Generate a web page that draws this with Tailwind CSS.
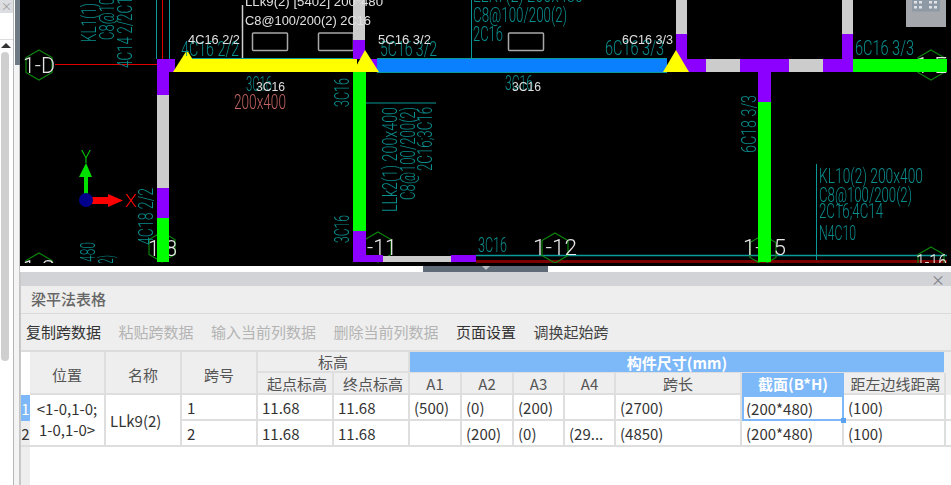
<!DOCTYPE html>
<html lang="en">
<head>
    <meta charset="UTF-8">
    <meta name="viewport" content="width=device-width, initial-scale=1.0">
    <title>梁平法表格</title>
    <script src="https://cdn.jsdelivr.net/npm/@tailwindcss/browser@4"></script>
</head>
<body class="bg-white font-['Noto_Sans_CJK_SC','Noto_Sans',sans-serif] overflow-hidden">
<div class="flex w-[951px] h-[485px] overflow-hidden">

    <!-- Left docked strip -->
    <div class="w-5 shrink-0 flex">
        <div class="w-[14px] flex flex-col border-r border-[#b4b6ba]">
            <div class="h-[13px] bg-[#dcdde0] text-[#999] text-[11px] leading-[13px] pl-[1px]">×</div>
            <div class="h-[27px] bg-white border-b border-[#ddd]"></div>
            <div class="flex-1 px-[1px]">
                <div class="w-0 h-0 mt-[3px] ml-[0px] border-x-[5px] border-x-transparent border-b-[5px] border-b-[#333]"></div>
                <div class="w-2 h-[309px] mt-[4px] bg-[#cfcfcf] rounded-[4px]"></div>
            </div>
        </div>
        <div class="w-[6px] flex flex-col">
            <div class="h-[65px] bg-[#6f7a85] ml-[1px]"></div>
            <div class="flex-1 bg-[#f4f4f4] border-r border-[#c4c4c4]"></div>
        </div>
    </div>

    <div class="flex-1 flex flex-col min-w-0">
        <!-- CAD view -->
        <svg class="block w-[931px] h-[266px] shrink-0 bg-black blur-[0.4px]" viewBox="20 0 931 266" xmlns="http://www.w3.org/2000/svg">
            <!-- axis + guide lines -->
            <g fill="none" stroke-width="1">
                <path d="M55 64.5H157M162.5 0V59" stroke="#e00000"/>
                <path d="M156.5 0V59M169.5 0V59M471.5 0V58M366 103H436M816.5 164V260" stroke="#0b9a9a"/>
                <path d="M242.500 5V59" stroke="#cfcfcf" stroke-width="1.500"/>
                <path d="M476 255.500H947" stroke="#0b9a9a" stroke-width="1.500"/>
                <path d="M476 261.500H947" stroke="#7a0000" stroke-width="3"/>
                <rect x="252.500" y="33" width="35" height="17.500" stroke="#a8a8a8" stroke-width="1.500" rx="1"/>
                <rect x="318.500" y="33" width="35" height="17.500" stroke="#a8a8a8" stroke-width="1.500" rx="1"/>
                <rect x="508.500" y="33" width="35" height="17.500" stroke="#a8a8a8" stroke-width="1.500" rx="1"/>
            </g>

            <!-- grid bubbles -->
            <g fill="none" stroke="#0c860c" stroke-width="1.200">
                <polygon points="39,50 52,57.500 52,72.500 39,80 26,72.500 26,57.500"/>
                <polygon points="39,253 52,260.500 52,275.500 39,283 26,275.500 26,260.500"/>
                <polygon points="162,232 175,239.500 175,254.500 162,262 149,254.500 149,239.500"/>
                <polygon points="378,232 391,239.500 391,254.500 378,262 365,254.500 365,239.500"/>
                <polygon points="555,233 568,240.500 568,255.500 555,263 542,255.500 542,240.500"/>
                <polygon points="763,235 776,242.500 776,257.500 763,265 750,257.500 750,242.500"/>
                <polygon points="931,50 944,57.500 944,72.500 931,80 918,72.500 918,57.500"/>
                <polygon points="931,247 944,254.500 944,269.500 931,277 918,269.500 918,254.500"/>
            </g>

            <!-- axis labels under the beams -->
            <g font-size="22" class="fill-[#e6e6e6] font-['Roboto',sans-serif] font-light">
                <text x="23" y="73" textLength="32" lengthAdjust="spacingAndGlyphs">1-D</text>
                <text x="23" y="276" textLength="32" lengthAdjust="spacingAndGlyphs">1-C</text>
                <text x="148" y="256" textLength="29" lengthAdjust="spacingAndGlyphs">1-8</text>
                <text x="367" y="255" textLength="30" lengthAdjust="spacingAndGlyphs">-11</text>
                <text x="533" y="255" textLength="44" lengthAdjust="spacingAndGlyphs">1-12</text>
                <text x="743" y="255" textLength="43" lengthAdjust="spacingAndGlyphs">1-15</text>
                <text x="916" y="73" textLength="31" lengthAdjust="spacingAndGlyphs">1-E</text>
                <text x="916" y="270" textLength="31" lengthAdjust="spacingAndGlyphs">1-16</text>
            </g>

            <!-- beams -->
            <g>
                <rect x="157" y="59" width="18" height="13" fill="#8b00ff"/>
                <rect x="157" y="59" width="12" height="36" fill="#8b00ff"/>
                <rect x="157" y="95" width="12" height="93" fill="#cccccc"/>
                <rect x="157" y="188" width="12" height="30" fill="#8b00ff"/>
                <rect x="157" y="218" width="12" height="44" fill="#00ff00"/>

                <rect x="353" y="0" width="12" height="40" fill="#cccccc"/>
                <rect x="353" y="40" width="12" height="19" fill="#8b00ff"/>
                <rect x="353" y="72" width="13" height="159" fill="#00ff00"/>
                <rect x="353" y="231" width="13" height="31" fill="#8b00ff"/>
                <rect x="353" y="255" width="30" height="7" fill="#8b00ff"/>
                <rect x="383" y="256" width="68" height="6" fill="#cccccc"/>
                <rect x="451" y="255" width="25" height="7" fill="#8b00ff"/>

                <rect x="365" y="59" width="12" height="13" fill="#8b00ff"/>
                <rect x="377" y="59" width="290" height="13" fill="#0a80ff"/>

                <rect x="676" y="0" width="11" height="34" fill="#cccccc"/>
                <rect x="676" y="34" width="11" height="38" fill="#8b00ff"/>
                <rect x="676" y="59" width="30" height="13" fill="#8b00ff"/>
                <rect x="706" y="59" width="34" height="13" fill="#cccccc"/>
                <rect x="740" y="59" width="49" height="13" fill="#8b00ff"/>
                <rect x="789" y="59" width="34" height="13" fill="#cccccc"/>
                <rect x="823" y="59" width="30" height="13" fill="#8b00ff"/>
                <rect x="842" y="0" width="11" height="34" fill="#cccccc"/>
                <rect x="842" y="34" width="11" height="38" fill="#8b00ff"/>
                <rect x="853" y="59" width="94" height="13" fill="#00ff00"/>

                <rect x="758" y="72" width="13" height="30" fill="#8b00ff"/>
                <rect x="758" y="102" width="13" height="160" fill="#00ff00"/>

                <!-- selected span -->
                <rect x="187" y="59" width="170" height="13" fill="#ffff00"/>
                <path d="M187 58.500H353M377 58.500H667M377 72.500H667" fill="none" stroke="#0b9a9a"/>
                <polygon points="187,50 200,72 173,72" fill="#ffff00"/>
                <polygon points="365,50 379,72 353,72" fill="#ffff00"/>
                <polygon points="676,50 689,72 663,72" fill="#ffff00"/>
            </g>

            <!-- dim teal annotations -->
            <g font-size="20" class="fill-[#0a8f8f] font-['Roboto',sans-serif] font-light">
                <text x="181" y="56" textLength="58" lengthAdjust="spacingAndGlyphs">4C16 2/2</text>
                <text x="380" y="56" textLength="57" lengthAdjust="spacingAndGlyphs">5C16 3/2</text>
                <text x="605" y="55" textLength="59" lengthAdjust="spacingAndGlyphs">6C16 3/3</text>
                <text x="855" y="55" textLength="59" lengthAdjust="spacingAndGlyphs">6C16 3/3</text>
                <text x="246" y="91" textLength="26" lengthAdjust="spacingAndGlyphs">3C16</text>
                <text x="505" y="90" textLength="28" lengthAdjust="spacingAndGlyphs">3C16</text>
                <text x="478" y="252" textLength="29" lengthAdjust="spacingAndGlyphs">3C16</text>
                <text x="473" y="2" textLength="110" lengthAdjust="spacingAndGlyphs">LLK7(2) 200x480</text>
                <text x="473" y="22" textLength="94" lengthAdjust="spacingAndGlyphs">C8@100/200(2)</text>
                <text x="473" y="41" textLength="30" lengthAdjust="spacingAndGlyphs">2C16</text>
                <text x="819" y="183" textLength="104" lengthAdjust="spacingAndGlyphs">KL10(2) 200x400</text>
                <text x="819" y="202" textLength="93" lengthAdjust="spacingAndGlyphs">C8@100/200(2)</text>
                <text x="819" y="218" textLength="64" lengthAdjust="spacingAndGlyphs">2C16;4C14</text>
                <text x="819" y="240" textLength="37" lengthAdjust="spacingAndGlyphs">N4C10</text>
                <text transform="translate(96 42) rotate(-90)" textLength="39" lengthAdjust="spacingAndGlyphs">KL1(1)</text>
                <text transform="translate(114 40) rotate(-90)" textLength="92" lengthAdjust="spacingAndGlyphs">C8@100/200(2)</text>
                <text transform="translate(132 68) rotate(-90)" textLength="78" lengthAdjust="spacingAndGlyphs">4C14 2/2C16</text>
                <text transform="translate(349 107) rotate(-90)" textLength="29" lengthAdjust="spacingAndGlyphs">3C16</text>
                <text transform="translate(349 243) rotate(-90)" textLength="28" lengthAdjust="spacingAndGlyphs">3C16</text>
                <text transform="translate(397 212) rotate(-90)" textLength="105" lengthAdjust="spacingAndGlyphs">LLk2(1) 200x400</text>
                <text transform="translate(415 200) rotate(-90)" textLength="93" lengthAdjust="spacingAndGlyphs">C8@100/200(2)</text>
                <text transform="translate(432 171) rotate(-90)" textLength="64" lengthAdjust="spacingAndGlyphs">2C16;3C16</text>
                <text transform="translate(153 245) rotate(-90)" textLength="57" lengthAdjust="spacingAndGlyphs">4C18 2/2</text>
                <text transform="translate(95 262) rotate(-90)" textLength="20" lengthAdjust="spacingAndGlyphs">480</text>
                <text transform="translate(113 264) rotate(-90)" textLength="9" lengthAdjust="spacingAndGlyphs">2)</text>
                <text transform="translate(756 153) rotate(-90)" textLength="58" lengthAdjust="spacingAndGlyphs">6C18 3/3</text>
            </g>

            <!-- bright span labels -->
            <g font-size="13" class="fill-[#e0e0e0] font-['Liberation_Sans',sans-serif]">
                <text x="188" y="44" textLength="52" lengthAdjust="spacingAndGlyphs">4C16 2/2</text>
                <text x="378" y="44" textLength="53" lengthAdjust="spacingAndGlyphs">5C16 3/2</text>
                <text x="622" y="44" textLength="51" lengthAdjust="spacingAndGlyphs">6C16 3/3</text>
                <text x="256" y="91" textLength="29" lengthAdjust="spacingAndGlyphs">3C16</text>
                <text x="512" y="91" textLength="29" lengthAdjust="spacingAndGlyphs">3C16</text>
                <text x="245" y="6" textLength="138" lengthAdjust="spacingAndGlyphs">LLk9(2) [5402] 200*480</text>
                <text x="245" y="25" textLength="126" lengthAdjust="spacingAndGlyphs">C8@100/200(2) 2C16</text>
            </g>
            <text x="234" y="109" font-size="20" textLength="52" lengthAdjust="spacingAndGlyphs" class="fill-[#c46464] font-['Roboto',sans-serif] font-light">200x400</text>

            <!-- UCS icon -->
            <path d="M84 195V177H79L86 163L92 177H88V195Z" fill="#00e000"/>
            <path d="M90 197H108V194L123 200.500L108 207V204H90Z" fill="#ff0000"/>
            <circle cx="86" cy="200" r="7" fill="#00008b"/>
            <text x="81" y="163" font-size="18" textLength="10" lengthAdjust="spacingAndGlyphs" class="fill-[#00d000] font-['Roboto',sans-serif] font-light">Y</text>
            <text x="125" y="207" font-size="18" textLength="12" lengthAdjust="spacingAndGlyphs" class="fill-[#ff0000] font-['Roboto',sans-serif] font-light">X</text>

            <!-- view cube widget -->
            <rect x="906" y="0" width="40" height="27" fill="#a4a7ab"/>
            <rect x="912" y="0" width="28" height="11.500" fill="#8e99a6"/>
            <g fill="#dfe3e8">
                <rect x="914" y="1" width="3" height="2.500"/><rect x="919" y="1" width="3" height="2.500"/><rect x="929" y="1" width="3" height="2.500"/><rect x="934" y="1" width="3" height="2.500"/>
                <rect x="914" y="6" width="3" height="2.500"/><rect x="919" y="6" width="3" height="2.500"/><rect x="929" y="6" width="3" height="2.500"/><rect x="934" y="6" width="3" height="2.500"/>
            </g>

            <!-- drawing area stops short of the view edge -->
            <rect x="20" y="263" width="931" height="3" fill="#000000"/>
        </svg>

        <!-- Splitter -->
        <div class="h-[6px] shrink-0 flex bg-white">
            <div class="ml-[403px] w-[125px] h-[6px] bg-[#5f6b76] flex justify-center">
                <div class="w-0 h-0 border-x-[4px] border-x-transparent border-t-[4px] border-t-[#b9bec3]"></div>
            </div>
        </div>

        <!-- Panel -->
        <div class="flex-1 flex flex-col min-h-0 border-l border-[#c9c9c9] bg-white">
            <div class="h-[14px] shrink-0 bg-[#d2d3d7] flex justify-end items-center pr-[6px] text-[#7d7f84] text-[14px] leading-none">×</div>
            <div class="h-[28px] shrink-0 bg-[#eeeeee] border-b border-[#dadada] flex items-center pl-[10px] text-[15px] font-medium text-[#666]">梁平法表格</div>
            <div class="h-[38px] shrink-0 bg-[#eeeeee] flex items-center gap-[17.5px] pl-[5px] text-[15px] text-[#333] border-b-2 border-[#dcdcdc]">
                <span>复制跨数据</span>
                <span class="text-[#b4b4b4]">粘贴跨数据</span>
                <span class="text-[#b4b4b4]">输入当前列数据</span>
                <span class="text-[#b4b4b4]">删除当前列数据</span>
                <span>页面设置</span>
                <span class="text-[#444]">调换起始跨</span>
            </div>

            <!-- Grid -->
            <div class="grid grid-cols-[9px_76px_76px_76px_76px_76px_52px_52px_51px_51px_126px_102px_100px_7px] grid-rows-[21px_22px_26px_26px] text-[15px] leading-none text-[#333]">
                <div class="row-span-2 bg-white"></div>
                <div class="row-span-2 pt-[4px] bg-[#eeeeee] text-[#555] flex items-center justify-center border-r-2 border-b-2 border-[#dedede]">位置</div>
                <div class="row-span-2 pt-[4px] bg-[#eeeeee] text-[#555] flex items-center justify-center border-r-2 border-b-2 border-[#dedede]">名称</div>
                <div class="row-span-2 pt-[4px] bg-[#eeeeee] text-[#555] flex items-center justify-center border-r-2 border-b-2 border-[#dedede]">跨号</div>
                <div class="col-span-2 bg-[#eeeeee] text-[#555] flex items-center justify-center border-r-2 border-b-2 border-[#dedede]">标高</div>
                <div class="col-span-7 bg-[#7db8f8] text-white font-bold flex items-center justify-center border-b border-[#dedede]">构件尺寸(mm)</div>
                <div class="bg-[#eeeeee]"></div>

                <div class="pl-[4px] bg-[#eeeeee] text-[#555] flex items-center justify-center border-r-2 border-b-2 border-[#dedede]">起点标高</div>
                <div class="pl-[4px] bg-[#eeeeee] text-[#555] flex items-center justify-center border-r-2 border-b-2 border-[#dedede]">终点标高</div>
                <div class="bg-[#eeeeee] text-[#555] flex items-center justify-center border-r-2 border-b-2 border-[#dedede]">A1</div>
                <div class="bg-[#eeeeee] text-[#555] flex items-center justify-center border-r-2 border-b-2 border-[#dedede]">A2</div>
                <div class="bg-[#eeeeee] text-[#555] flex items-center justify-center border-r-2 border-b-2 border-[#dedede]">A3</div>
                <div class="bg-[#eeeeee] text-[#555] flex items-center justify-center border-r-2 border-b-2 border-[#dedede]">A4</div>
                <div class="bg-[#eeeeee] text-[#555] flex items-center justify-center border-r-2 border-b-2 border-[#dedede]">跨长</div>
                <div class="bg-[#7db8f8] text-white font-semibold flex items-center justify-center border-b-2 border-[#7db8f8]">截面(B*H)</div>
                <div class="pl-[3px] bg-[#eeeeee] text-[#555] flex items-center justify-center border-b-2 border-[#dedede]">距左边线距离</div>
                <div class="bg-[#eeeeee] border-l-2 border-[#dedede]"></div>

                <!-- row 1 -->
                <div class="bg-[#7db8f8] text-white flex items-center justify-center">1</div>
                <div class="row-span-2 flex flex-col justify-center items-center gap-[6px] border-r-2 border-b-2 border-[#dedede] pb-[3px]"><span>&lt;1-0,1-0;</span><span>1-0,1-0&gt;</span></div>
                <div class="row-span-2 flex items-center pl-[4px] border-r-2 border-b-2 border-[#dedede]">LLk9(2)</div>
                <div class="flex items-center pl-[5px] border-r-2 border-b-2 border-[#dedede]">1</div>
                <div class="flex items-center pl-[4px] border-r-2 border-b-2 border-[#dedede]">11.68</div>
                <div class="flex items-center pl-[4px] border-r-2 border-b-2 border-[#dedede]">11.68</div>
                <div class="flex items-center pl-[4px] border-r-2 border-b-2 border-[#dedede]">(500)</div>
                <div class="flex items-center pl-[4px] border-r-2 border-b-2 border-[#dedede]">(0)</div>
                <div class="flex items-center pl-[4px] border-r-2 border-b-2 border-[#dedede]">(200)</div>
                <div class="flex items-center pl-[4px] border-r-2 border-b-2 border-[#dedede]"></div>
                <div class="flex items-center pl-[4px] border-r-2 border-b-2 border-[#dedede]">(2700)</div>
                <div class="relative flex items-center pl-[2px] border-2 border-[#7db8f8]">(200*480)<span class="absolute -right-[4px] -bottom-[4px] w-[5px] h-[5px] bg-[#5aa3f2]"></span></div>
                <div class="flex items-center pl-[4px] border-b-2 border-[#dedede]">(100)</div>
                <div class="border-l-2 border-b-2 border-[#dedede]"></div>

                <!-- row 2 -->
                <div class="bg-[#eeeeee] flex items-center justify-center border-b-2 border-[#dedede]">2</div>
                <div class="flex items-center pl-[5px] border-r-2 border-b-2 border-[#dedede]">2</div>
                <div class="flex items-center pl-[4px] border-r-2 border-b-2 border-[#dedede]">11.68</div>
                <div class="flex items-center pl-[4px] border-r-2 border-b-2 border-[#dedede]">11.68</div>
                <div class="flex items-center pl-[4px] border-r-2 border-b-2 border-[#dedede]"></div>
                <div class="flex items-center pl-[4px] border-r-2 border-b-2 border-[#dedede]">(200)</div>
                <div class="flex items-center pl-[4px] border-r-2 border-b-2 border-[#dedede]">(0)</div>
                <div class="flex items-center pl-[4px] border-r-2 border-b-2 border-[#dedede]">(29...</div>
                <div class="flex items-center pl-[4px] border-r-2 border-b-2 border-[#dedede]">(4850)</div>
                <div class="flex items-center pl-[4px] border-r-2 border-b-2 border-[#dedede]">(200*480)</div>
                <div class="flex items-center pl-[4px] border-b-2 border-[#dedede]">(100)</div>
                <div class="border-l-2 border-b-2 border-[#dedede]"></div>
            </div>

            <div class="flex-1 min-h-0">
                <div class="w-[9px] h-full bg-[#eeeeee]"></div>
            </div>
        </div>
    </div>
</div>
</body>
</html>
